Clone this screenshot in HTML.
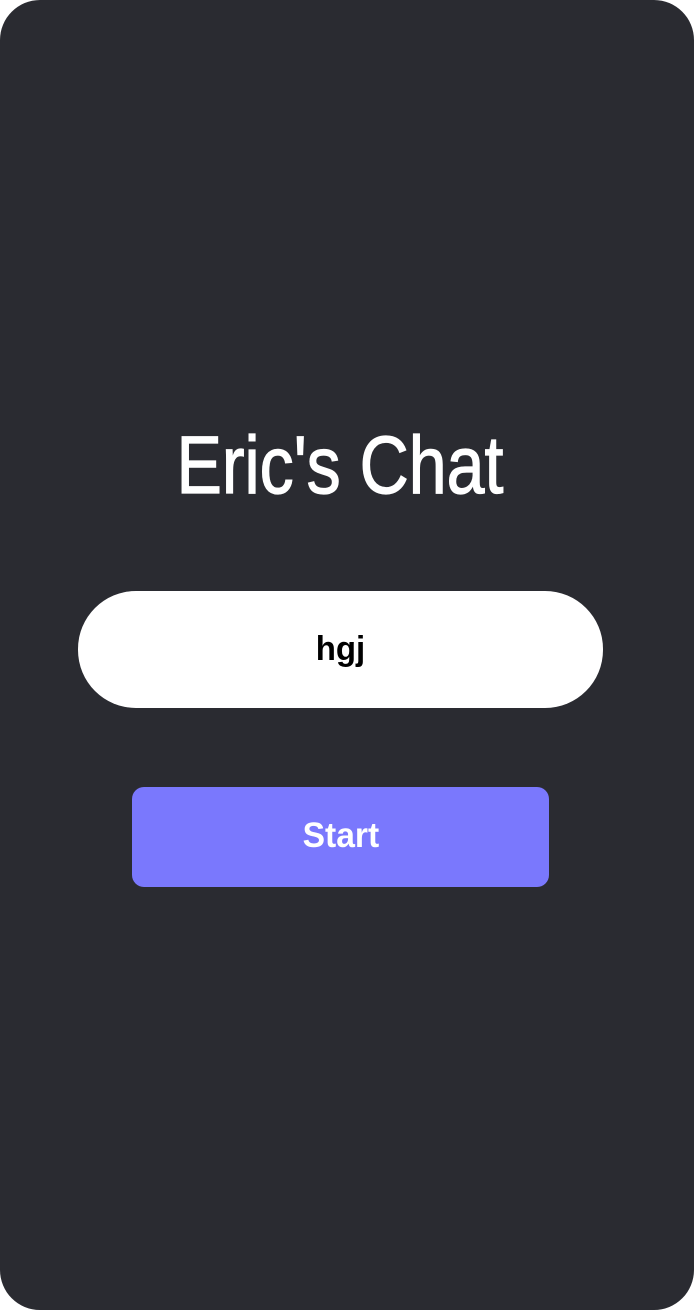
<!DOCTYPE html>
<html><head><style>
html,body{margin:0;padding:0;background:#fff;}
.f{position:absolute;left:0;top:0;width:694px;height:1310px;background:#2a2b31;border-radius:40px;overflow:hidden;font-family:"Liberation Sans",sans-serif;}
.t{position:absolute;left:-7px;width:694px;top:418px;text-align:center;color:#fff;font-size:82px;line-height:96px;}
.t span{display:inline-block;transform:scaleX(0.83);-webkit-text-stroke:1.3px #fff;}
.i{position:absolute;left:78px;top:591px;width:525px;height:117px;background:#fff;border-radius:58px;text-align:center;line-height:117px;font-size:34px;font-weight:bold;color:#000;}
.i span{display:inline-block;transform:scaleX(0.97);}
.b{position:absolute;left:132px;top:787px;width:417px;height:100px;background:#7a78fd;border-radius:12px;text-align:center;line-height:98px;color:#fff;font-size:35px;font-weight:bold;}
.b span{display:inline-block;transform:scaleX(0.96);}
</style></head><body>
<div class="f">
<div class="t"><span>Eric's Chat</span></div>
<div class="i"><span>hgj</span></div>
<div class="b"><span>Start</span></div>
</div>
</body></html>
